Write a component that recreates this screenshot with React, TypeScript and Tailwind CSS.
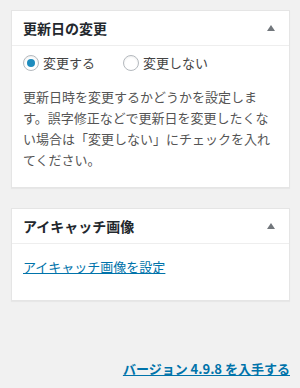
import { useState } from "react";

function Toggle() {
  return (
    <svg width="8" height="6" viewBox="0 0 8 6" className="shrink-0">
      <polygon points="4,0 8,6 0,6" fill="#72777c" />
    </svg>
  );
}

function Radio({ checked, label, onClick }: { checked: boolean; label: string; onClick: () => void }) {
  return (
    <label className="flex h-4 items-center cursor-pointer" onClick={onClick}>
      <span className="w-4 h-4 rounded-full border border-[#b4b9be] bg-white shadow-[inset_0_1px_2px_rgba(0,0,0,0.07)] flex items-center justify-center">
        {checked && <span className="w-2 h-2 rounded-full bg-[#1e8cbe]" />}
      </span>
      <span className="ml-1 text-[13px] text-[#444]">{label}</span>
    </label>
  );
}

function Postbox({ title, children }: { title: string; children: React.ReactNode }) {
  return (
    <div className="ml-[11px] w-[279px] bg-white border border-[#e5e5e5] shadow-[0_1px_1px_rgba(0,0,0,0.04)]">
      <div className="h-[35px] px-[11px] flex items-center justify-between border-b border-[#eeeeee]">
        <h2 className="text-[14px] font-bold text-[#23282d] leading-none">{title}</h2>
        <span className="mr-[3px]">
          <Toggle />
        </span>
      </div>
      {children}
    </div>
  );
}

export default function App() {
  const [change, setChange] = useState(true);

  return (
    <div
      className="w-[300px] h-[388px] bg-[#f1f1f1] pt-[10px] overflow-hidden"
      style={{ fontFamily: '"Noto Sans CJK JP", "Noto Sans", sans-serif' }}
    >
      <Postbox title="更新日の変更">
        <div className="px-[11px] pt-[9px] pb-[17px]">
          <div className="flex gap-[28px]">
            <Radio checked={change} label="変更する" onClick={() => setChange(true)} />
            <Radio checked={!change} label="変更しない" onClick={() => setChange(false)} />
          </div>
          <p className="mt-[15px] text-[13px] leading-[21px] text-[#555]">
            更新日時を変更するかどうかを設定します。誤字修正などで更新日を変更したくない場合は「変更しない」にチェックを入れてください。
          </p>
        </div>
      </Postbox>

      <div className="h-[20px]" />

      <Postbox title="アイキャッチ画像">
        <div className="px-[11px] pt-[13px] pb-[23px]">
          <a href="#" className="text-[13px] leading-[20px] text-[#0073aa] underline block w-fit">
            アイキャッチ画像を設定
          </a>
        </div>
      </Postbox>

      <div className="mt-[54px] pr-[10px] text-right">
        <a href="#" className="text-[13px] leading-[20px] font-bold text-[#0073aa] underline">
          バージョン 4.9.8 を入手する
        </a>
      </div>
    </div>
  );
}
